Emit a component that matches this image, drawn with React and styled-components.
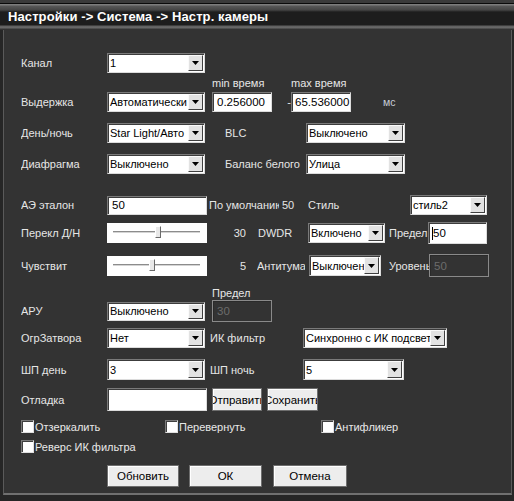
import React from 'react'
import styled, { createGlobalStyle } from 'styled-components'

const FONT = '"Liberation Sans", Arial, sans-serif'

const GlobalStyle = createGlobalStyle`
  body {
    margin: 0;
    background: #1c1c1c;
    font-family: ${FONT};
  }
`

// window frame
const Frame = styled.div`
  width: 514px;
  height: 501px;
  display: flex;
  flex-direction: column;
  background: #262626;
  overflow: hidden;
`

const TitleBar = styled.div`
  height: 30px;
  flex-shrink: 0;
  display: flex;
  align-items: center;
  padding-left: 8px;
  box-sizing: border-box;
  background: linear-gradient(
    to bottom,
    #3a3a3a 0,
    #3a3a3a 3px,
    #0a0a0a 3px,
    #0a0a0a 4px,
    #7c7c7c 4px,
    #7c7c7c 5px,
    #575757 6px,
    #444 10px,
    #1d1d1d 12px,
    #1d1d1d 25px,
    #5f5f5f 26px,
    #6a6a6a 28px,
    #333 29px
  );
`

const Title = styled.span`
  color: #fff;
  font-size: 13px;
  font-weight: bold;
  letter-spacing: 0.1px;
  padding-top: 3px;
  white-space: nowrap;
`

const Body = styled.div`
  flex: 1;
  display: flex;
  flex-direction: column;
  background: #333;
  margin: 0 2px 6px 3px;
  padding-left: 17px;
  border-left: 1px solid #5a5a5a;
  border-right: 1px solid #5a5a5a;
  border-bottom: 2px solid #707070;
`

const Row = styled.div`
  display: flex;
  align-items: center;
  height: ${p => p.$h || 20}px;
  margin-top: ${p => p.$mt || 0}px;
  flex-shrink: 0;
`

const Label = styled.span`
  width: ${p => p.$w}px;
  margin-left: ${p => p.$ml || 0}px;
  flex-shrink: 0;
  overflow: hidden;
  white-space: nowrap;
  color: ${p => p.$color || '#e6e6e6'};
  font-size: ${p => p.$size || 11}px;
  text-align: ${p => (p.$right ? 'right' : 'left')};
`

// inputs
const SelectBox = styled.div`
  width: ${p => p.$w}px;
  height: ${p => p.$h || 20}px;
  margin-left: ${p => p.$ml || 0}px;
  box-sizing: border-box;
  flex-shrink: 0;
  display: flex;
  background: #fff;
  border: 1px solid;
  border-color: #7a7a7a #dcdcdc #dcdcdc #7a7a7a;
  box-shadow: inset 1px 1px 0 #3c3c3c;
`

const SelectValue = styled.span`
  flex: 1;
  min-width: 0;
  display: flex;
  align-items: center;
  padding-left: 2px;
  overflow: hidden;
  white-space: nowrap;
  font-size: 11px;
  color: #000;
`

const ArrowBtn = styled.span`
  width: 15px;
  margin: 1px 1px 1px 0;
  box-sizing: border-box;
  flex-shrink: 0;
  display: flex;
  align-items: center;
  justify-content: center;
  background: #e2e2e2;
  border: 1px solid;
  border-color: #fafafa #404040 #404040 #fafafa;
`

const TextBox = styled.div`
  width: ${p => p.$w}px;
  height: ${p => p.$h || 20}px;
  margin-left: ${p => p.$ml || 0}px;
  box-sizing: border-box;
  flex-shrink: 0;
  display: flex;
  align-items: center;
  padding-left: ${p => p.$pl || 4}px;
  font-size: 11.5px;
  color: ${p => (p.$disabled ? '#6c6c6c' : '#000')};
  background: ${p => (p.$disabled ? '#333' : '#fff')};
  border: 1px solid;
  border-color: ${p => (p.$disabled ? '#8a8a8a' : '#7a7a7a #dcdcdc #dcdcdc #7a7a7a')};
  box-shadow: inset 1px 1px 0 ${p => (p.$disabled ? '#2a2a2a' : '#3c3c3c')};
`

const Caret = styled.span`
  width: 1px;
  height: 13px;
  background: #000;
`

const SliderBox = styled.div`
  position: relative;
  width: ${p => p.$w}px;
  height: 20px;
  flex-shrink: 0;
  display: flex;
  align-items: center;
  padding: 0 7px 0 6px;
  box-sizing: border-box;
  background: #fff;
`

const Track = styled.div`
  flex: 1;
  height: 1px;
  margin-top: -2px;
  background: #8c8c8c;
  border-bottom: 1px solid #d4d4d4;
`

const Thumb = styled.span`
  position: absolute;
  top: 3px;
  width: 6px;
  height: 12px;
  box-sizing: border-box;
  background: #e8e8e8;
  border: 1px solid;
  border-color: #fff #6a6a6a #6a6a6a #fff;
`

const Button = styled.div`
  width: ${p => p.$w}px;
  height: ${p => p.$h || 22}px;
  margin-left: ${p => p.$ml || 0}px;
  box-sizing: border-box;
  flex-shrink: 0;
  display: flex;
  align-items: center;
  justify-content: center;
  overflow: hidden;
  white-space: nowrap;
  font-size: 11.5px;
  color: #000;
  background: #ededed;
  border: 1px solid #6e6e6e;
  box-shadow: inset 1px 1px 0 #fff;
`

const CheckCell = styled.label`
  width: ${p => (p.$w ? `${p.$w}px` : 'auto')};
  flex-shrink: 0;
  display: flex;
  align-items: center;
  font-size: 11px;
  color: #e8e8e8;
  white-space: nowrap;
`

const CheckBox = styled.span`
  width: 13px;
  height: 13px;
  margin-right: 1px;
  box-sizing: border-box;
  background: #fff;
  border: 1px solid;
  border-color: #7a7a7a #e0e0e0 #e0e0e0 #7a7a7a;
  box-shadow: inset 1px 1px 0 #404040;
`

const Select = ({ w, h, ml, value }) => (
  <SelectBox $w={w} $h={h} $ml={ml}>
    <SelectValue>{value}</SelectValue>
    <ArrowBtn>
      <svg width="7" height="4" viewBox="0 0 7 4">
        <polygon points="0,0 7,0 3.5,4" fill="#000" />
      </svg>
    </ArrowBtn>
  </SelectBox>
)

const Slider = ({ pos }) => (
  <SliderBox $w={100}>
    <Track />
    <Thumb style={{ left: pos }} />
  </SliderBox>
)

const Check = ({ w, text }) => (
  <CheckCell $w={w}>
    <CheckBox />
    {text}
  </CheckCell>
)

const App = () => {
  return (
    <>
      <GlobalStyle />
      <Frame>
        <TitleBar>
          <Title>Настройки -&gt; Система -&gt; Настр. камеры</Title>
        </TitleBar>
        <Body>
          <Row $mt={23}>
            <Label $w={86}>Канал</Label>
            <Select w={98} value="1" />
          </Row>

          <Row $mt={3} $h={14}>
            <Label $w={191} />
            <Label $w={79}>min время</Label>
            <Label $w={80}>max время</Label>
          </Row>
          <Row $mt={2}>
            <Label $w={86}>Выдержка</Label>
            <Select w={98} value="Автоматически" />
            <TextBox $w={60} $ml={7}>0.256000</TextBox>
            <Label $w={19} $right>-</Label>
            <TextBox $w={60} $pl={3}>65.536000</TextBox>
            <Label $w={30} $ml={32} $size={10.5} $color="#c8ced8">мс</Label>
          </Row>

          <Row $mt={11}>
            <Label $w={86}>День/ночь</Label>
            <Select w={98} value="Star Light/Авто" />
            <Label $w={81} $ml={20}>BLC</Label>
            <Select w={99} value="Выключено" />
          </Row>

          <Row $mt={11}>
            <Label $w={86}>Диафрагма</Label>
            <Select w={98} value="Выключено" />
            <Label $w={81} $ml={20}>Баланс белого</Label>
            <Select w={99} value="Улица" />
          </Row>

          <Row $mt={21}>
            <Label $w={86}>АЭ эталон</Label>
            <TextBox $w={100} $h={19}>50</TextBox>
            <Label $w={70} $ml={2}>По умолчанию</Label>
            <Label $w={26} $ml={3}>50</Label>
            <Label $w={102}>Стиль</Label>
            <Select w={77} value="стиль2" />
          </Row>

          <Row $mt={7} $h={22}>
            <Label $w={86}>Перекл Д/Н</Label>
            <Slider pos={48} />
            <Label $w={39} $right>30</Label>
            <Label $w={50} $ml={12}>DWDR</Label>
            <Select w={77} value="Включено" />
            <Label $w={39} $ml={4}>Предел</Label>
            <TextBox $w={59} $h={22} $pl={3}>
              <Caret />
              50
            </TextBox>
          </Row>

          <Row $mt={10} $h={23}>
            <Label $w={86}>Чувствит</Label>
            <Slider pos={42} />
            <Label $w={39} $right>5</Label>
            <Label $w={48} $ml={11}>Антитуман</Label>
            <Select w={72} h={21} ml={4} value="Выключено" />
            <Label $w={40} $ml={8}>Уровень</Label>
            <TextBox $w={60} $h={23} $disabled>50</TextBox>
          </Row>

          <Row $mt={10} $h={12}>
            <Label $w={191} />
            <Label $w={60}>Предел</Label>
          </Row>
          <Row $mt={1} $h={22}>
            <Label $w={86}>АРУ</Label>
            <Select w={98} h={19} value="Выключено" />
            <TextBox $w={60} $h={22} $ml={7} $disabled>30</TextBox>
          </Row>

          <Row $mt={6}>
            <Label $w={86}>ОгрЗатвора</Label>
            <Select w={98} value="Нет" />
            <Label $w={93} $ml={5}>ИК фильтр</Label>
            <Select w={144} value="Синхронно с ИК подсветкой" />
          </Row>

          <Row $mt={11} $h={21}>
            <Label $w={86}>ШП день</Label>
            <Select w={98} h={21} value="3" />
            <Label $w={93} $ml={5}>ШП ночь</Label>
            <Select w={101} h={21} value="5" />
          </Row>

          <Row $mt={8} $h={23}>
            <Label $w={86}>Отладка</Label>
            <TextBox $w={100} $h={23} />
            <Button $w={50} $h={23} $ml={5}>Отправить</Button>
            <Button $w={51} $h={23} $ml={5}>Сохранить</Button>
          </Row>

          <Row $mt={9} $h={13}>
            <Check w={144} text="Отзеркалить" />
            <Check w={156} text="Перевернуть" />
            <Check text="Антифликер" />
          </Row>
          <Row $mt={7} $h={13}>
            <Check text="Реверс ИК фильтра" />
          </Row>

          <Row $mt={12} $h={22}>
            <Label $w={86} />
            <Button $w={72}>Обновить</Button>
            <Button $w={73} $ml={10}>ОК</Button>
            <Button $w={74} $ml={11}>Отмена</Button>
          </Row>
        </Body>
      </Frame>
    </>
  )
}

export default App
